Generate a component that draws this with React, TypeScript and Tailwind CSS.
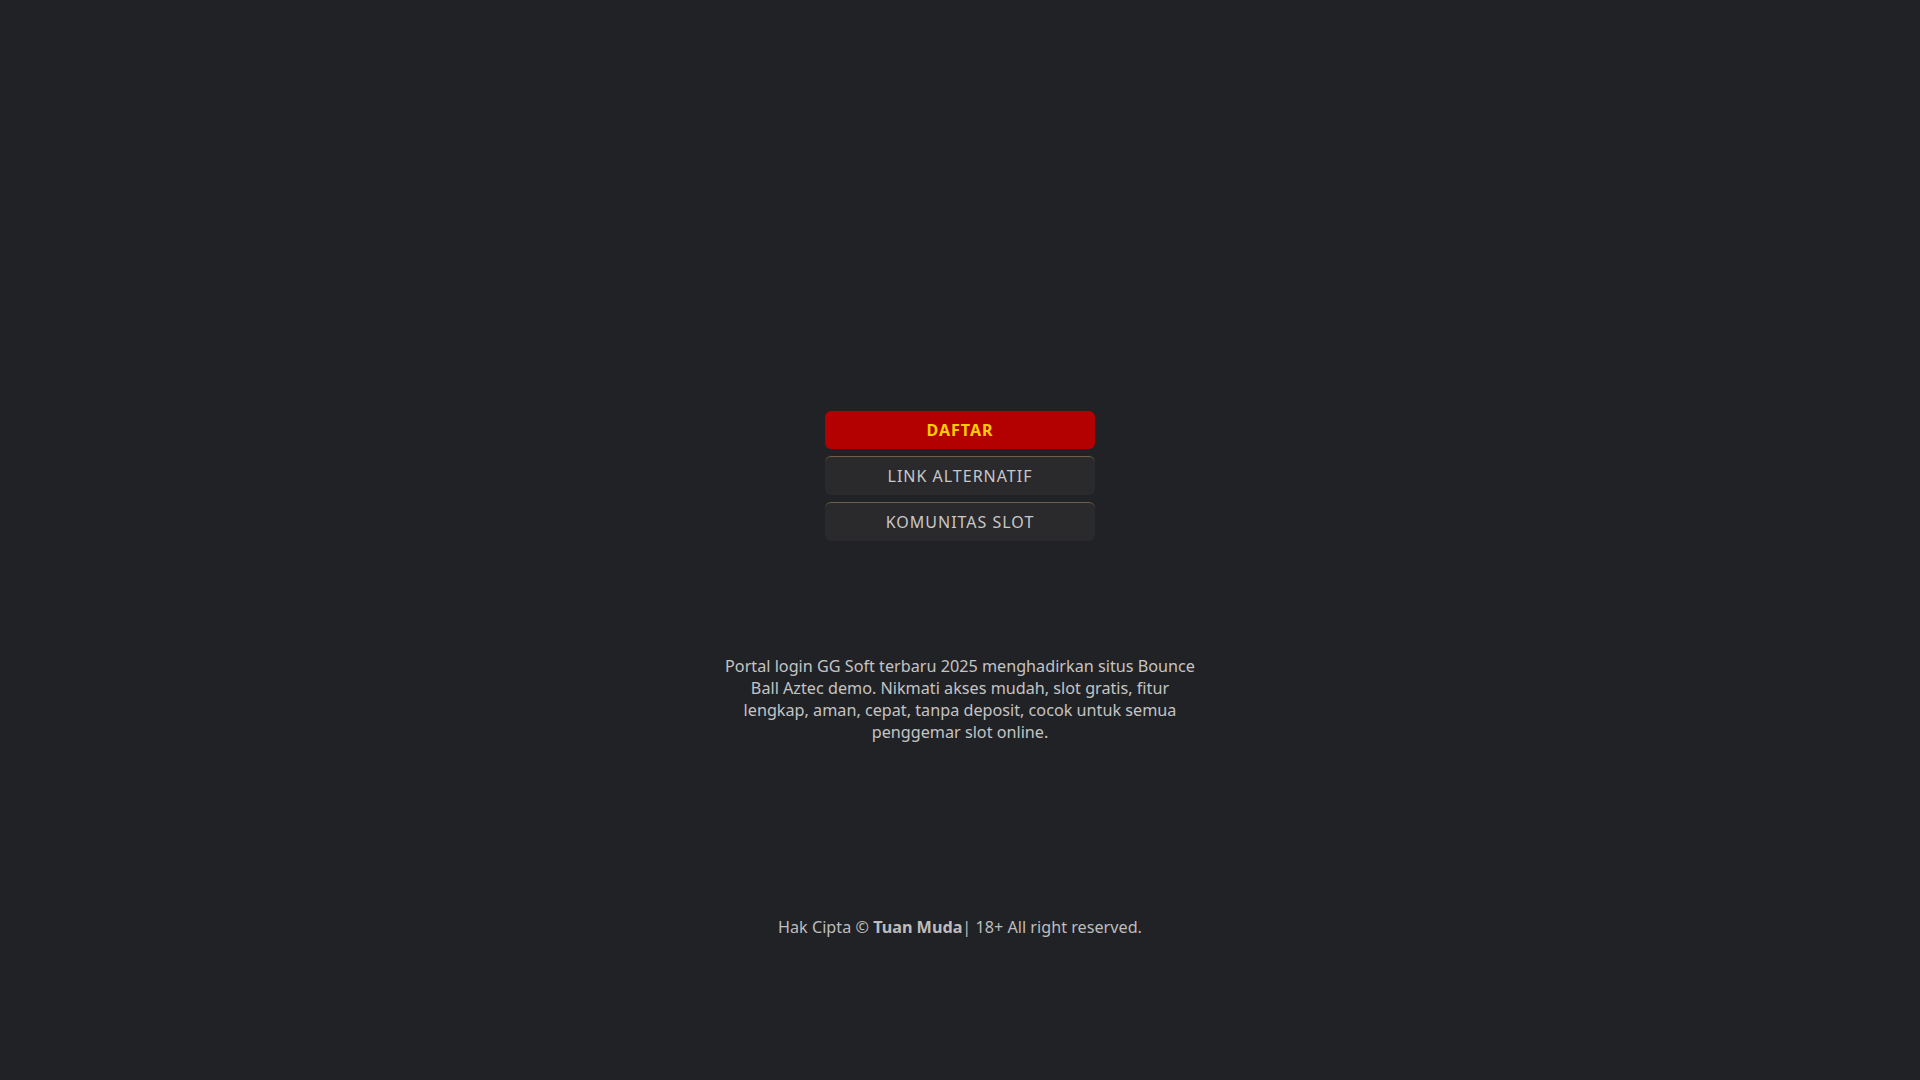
export default function App() {
  const links = [
    { label: 'LINK ALTERNATIF', href: '#' },
    { label: 'KOMUNITAS SLOT', href: '#' },
  ]

  return (
    <div className="min-h-screen bg-[#212226] flex flex-col items-center font-['Noto_Sans',sans-serif] text-[#c4c4c4]">
      {/* Buttons */}
      <div className="mt-[411px] w-[270px] flex flex-col gap-[7px]">
        <a
          href="#"
          className="h-[38px] flex items-center justify-center rounded-[6px] bg-[#b30000] text-[#ffcc00] font-bold text-[16px] tracking-[1px]"
        >
          DAFTAR
        </a>
        {links.map((link) => (
          <a
            key={link.label}
            href={link.href}
            className="h-[39px] flex items-center justify-center rounded-[6px] bg-[#2a2a2c] border-t border-[#6e6048] text-[#c8c8c8] text-[16px] tracking-[1px]"
          >
            {link.label}
          </a>
        ))}
      </div>

      {/* Description */}
      <p className="mt-[114px] max-w-[480px] text-center text-[16.2px] leading-[22px] text-[#c4c4c4]">
        Portal login GG Soft terbaru 2025 menghadirkan situs Bounce Ball Aztec demo. Nikmati akses mudah, slot gratis, fitur lengkap, aman, cepat, tanpa deposit, cocok untuk semua penggemar slot online.
      </p>

      {/* Footer */}
      <footer className="mt-[173px] text-[16.2px] leading-[22px] text-[#bdbdbd]">
        Hak Cipta © <span className="font-bold">Tuan Muda</span>| 18+ All right reserved.
      </footer>
    </div>
  )
}
